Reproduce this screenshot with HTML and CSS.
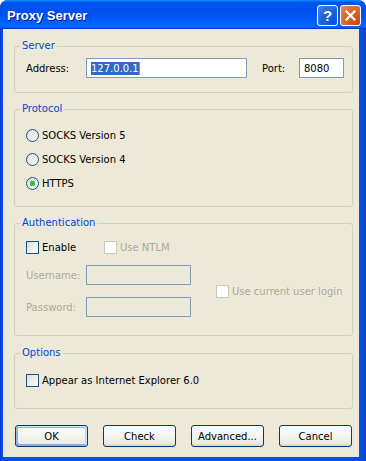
FILE: index.html
```html
<!DOCTYPE html>
<html lang="en">
<head>
    <meta charset="UTF-8">
    <title>Proxy Server</title>
    <link rel="stylesheet" href="styles.css">
</head>
<body>
    <div class="window">
        <div class="titlebar">
            <span class="title">Proxy Server</span>
            <div class="title-buttons">
                <span class="tb-btn help">?</span>
                <span class="tb-btn close">
                    <svg width="11" height="11" viewBox="0 0 11 11">
                        <path d="M1.5 1.5 L9.5 9.5 M9.5 1.5 L1.5 9.5" stroke="#fff" stroke-width="2.2" stroke-linecap="square"/>
                    </svg>
                </span>
            </div>
        </div>

        <div class="dialog">
            <fieldset class="group">
                <legend>Server</legend>
                <div class="server-row">
                    <span class="lbl addr-lbl">Address:</span>
                    <div class="textbox addr"><span class="sel">127.0.0.1</span><span class="caret"></span></div>
                    <span class="lbl port-lbl">Port:</span>
                    <div class="textbox port">8080</div>
                </div>
            </fieldset>

            <fieldset class="group protocol">
                <legend>Protocol</legend>
                <div class="radios">
                    <label class="opt"><input type="radio" name="proto" class="radio"><span>SOCKS Version 5</span></label>
                    <label class="opt"><input type="radio" name="proto" class="radio"><span>SOCKS Version 4</span></label>
                    <label class="opt"><input type="radio" name="proto" class="radio" checked><span>HTTPS</span></label>
                </div>
            </fieldset>

            <fieldset class="group auth">
                <legend>Authentication</legend>
                <div class="auth-body">
                    <div class="auth-top">
                        <label class="opt enable"><input type="checkbox" class="check"><span>Enable</span></label>
                        <label class="opt disabled"><input type="checkbox" class="check" disabled><span>Use NTLM</span></label>
                    </div>
                    <div class="auth-grid">
                        <span class="lbl disabled">Username:</span>
                        <div class="textbox off"></div>
                        <label class="opt disabled current"><input type="checkbox" class="check" disabled><span>Use current user login</span></label>
                        <span class="lbl disabled">Password:</span>
                        <div class="textbox off"></div>
                    </div>
                </div>
            </fieldset>

            <fieldset class="group options">
                <legend>Options</legend>
                <div class="options-body">
                    <label class="opt"><input type="checkbox" class="check"><span>Appear as Internet Explorer 6.0</span></label>
                </div>
            </fieldset>

            <div class="buttons">
                <button class="btn default">OK</button>
                <button class="btn">Check</button>
                <button class="btn">Advanced...</button>
                <button class="btn">Cancel</button>
            </div>
        </div>
    </div>
</body>
</html>
```

FILE: styles.css
```css
html, body {
    margin: 0;
    padding: 0;
}
body {
    background: #fff;
    font-family: "DejaVu Sans", sans-serif;
    font-size: 10px;
    line-height: 13px;
    color: #000;
}
.window {
    width: 366px;
    height: 461px;
    display: flex;
    flex-direction: column;
    background: linear-gradient(90deg, #0831d9 0, #0a4fe4 2px, #0a4fe4 362px, #0841d0 366px);
    border-radius: 8px 8px 0 0;
    overflow: hidden;
}
.titlebar {
    flex: none;
    height: 29px;
    display: flex;
    align-items: center;
    justify-content: space-between;
    padding: 0 5px 0 7px;
    background: linear-gradient(180deg, #0997ff, #0053ee 8%, #0050ee 40%, #06f 88%, #06f 93%, #005bff 95%, #003dd7 96%, #003dd7);
}
.title {
    font-family: "Liberation Sans", sans-serif;
    font-weight: bold;
    font-size: 13px;
    color: #fff;
    text-shadow: 1px 1px #0f1089;
    margin-top: 2px;
}
.title-buttons {
    display: flex;
    gap: 2px;
    margin-top: 2px;
}
.tb-btn {
    width: 21px;
    height: 21px;
    box-sizing: border-box;
    border: 1px solid #fff;
    border-radius: 3px;
    display: flex;
    align-items: center;
    justify-content: center;
}
.help {
    background: radial-gradient(circle at 90% 90%, #0054e9 0%, #2263d5 55%, #4d84ec 100%);
    color: #fff;
    font-family: "Liberation Sans", sans-serif;
    font-weight: bold;
    font-size: 15px;
}
.close {
    background: radial-gradient(circle at 90% 90%, #cc4611 0%, #dc6527 55%, #e5836e 100%);
}
.dialog {
    flex: 1;
    margin: 0 7px 4px 3px;
    background: #ece9d8;
    padding: 11px 6px 10px 11px;
    display: flex;
    flex-direction: column;
}
.group {
    margin: 0;
    padding: 0;
    border: 1px solid #d0d0bf;
    border-radius: 3px;
    min-width: 0;
}
.group legend {
    margin-left: 5px;
    padding: 0 2px;
    color: #0046d5;
    line-height: 12px;
}
.protocol, .auth {
    margin-top: 10px;
}
.options {
    margin-top: 11px;
}

/* server */
.server-row {
    display: flex;
    align-items: center;
    padding: 6px 0 14px 11px;
}
.addr-lbl {
    width: 60px;
}
.port-lbl {
    width: 37px;
    margin-left: 15px;
}
.textbox {
    box-sizing: border-box;
    height: 20px;
    border: 1px solid #7f9db9;
    background: #fff;
    padding-left: 4px;
    display: flex;
    align-items: center;
}
.addr {
    width: 161px;
}
.port {
    width: 45px;
}
.sel {
    background: #316ac5;
    color: #fff;
    line-height: 13px;
}
.caret {
    width: 1px;
    height: 13px;
    background: #d08a1c;
}
.textbox.off {
    width: 105px;
    background: #ece9d8;
}

/* checks and radios */
.opt {
    display: flex;
    align-items: center;
}
.opt span {
    margin-left: 3px;
}
.check, .radio {
    appearance: none;
    -webkit-appearance: none;
    margin: 0;
    width: 13px;
    height: 13px;
    box-sizing: border-box;
    border: 1px solid #1c5180;
    background: linear-gradient(135deg, #dcdcd7, #fff);
    flex: none;
}
.check:disabled {
    border-color: #cac8bb;
    background: #fff;
}
.radio {
    border-radius: 50%;
}
.radio:checked {
    background: radial-gradient(circle, #23a523 0, #4ac94a 2px, #23a523 2.5px, transparent 3px), linear-gradient(135deg, #dcdcd7, #fff);
}
.disabled {
    color: #aca899;
}

/* protocol */
.radios {
    padding: 8px 0 11px 11px;
}
.radios .opt {
    height: 24px;
}

/* authentication */
.auth-body {
    padding: 12px 0 18px 11px;
}
.auth-top {
    display: flex;
}
.enable {
    width: 78px;
}
.auth-grid {
    margin-top: 11px;
    display: grid;
    grid-template-columns: 60px 105px 1fr;
    grid-template-rows: 20px 20px;
    row-gap: 12px;
    align-items: center;
}
.current {
    grid-column: 3;
    grid-row: 1 / span 2;
    padding-left: 25px;
}

/* options */
.options-body {
    padding: 15px 0 21px 11px;
}

/* buttons */
.buttons {
    margin-top: 16px;
    display: flex;
    justify-content: space-between;
    padding: 0 1px;
}
.btn {
    width: 73px;
    height: 22px;
    box-sizing: border-box;
    border: 1px solid #003c74;
    border-radius: 3px;
    background: linear-gradient(180deg, #fff, #ecebe6 86%, #d6d0c5);
    font-family: "DejaVu Sans", sans-serif;
    font-size: 10px;
    color: #000;
    padding: 0;
}
.btn.default {
    box-shadow: inset -1px 1px #cee7ff, inset 1px 2px #98b8ea, inset -2px 2px #bcd4f6, inset 1px -1px #89ade4, inset 2px -2px #89ade4;
}
```
